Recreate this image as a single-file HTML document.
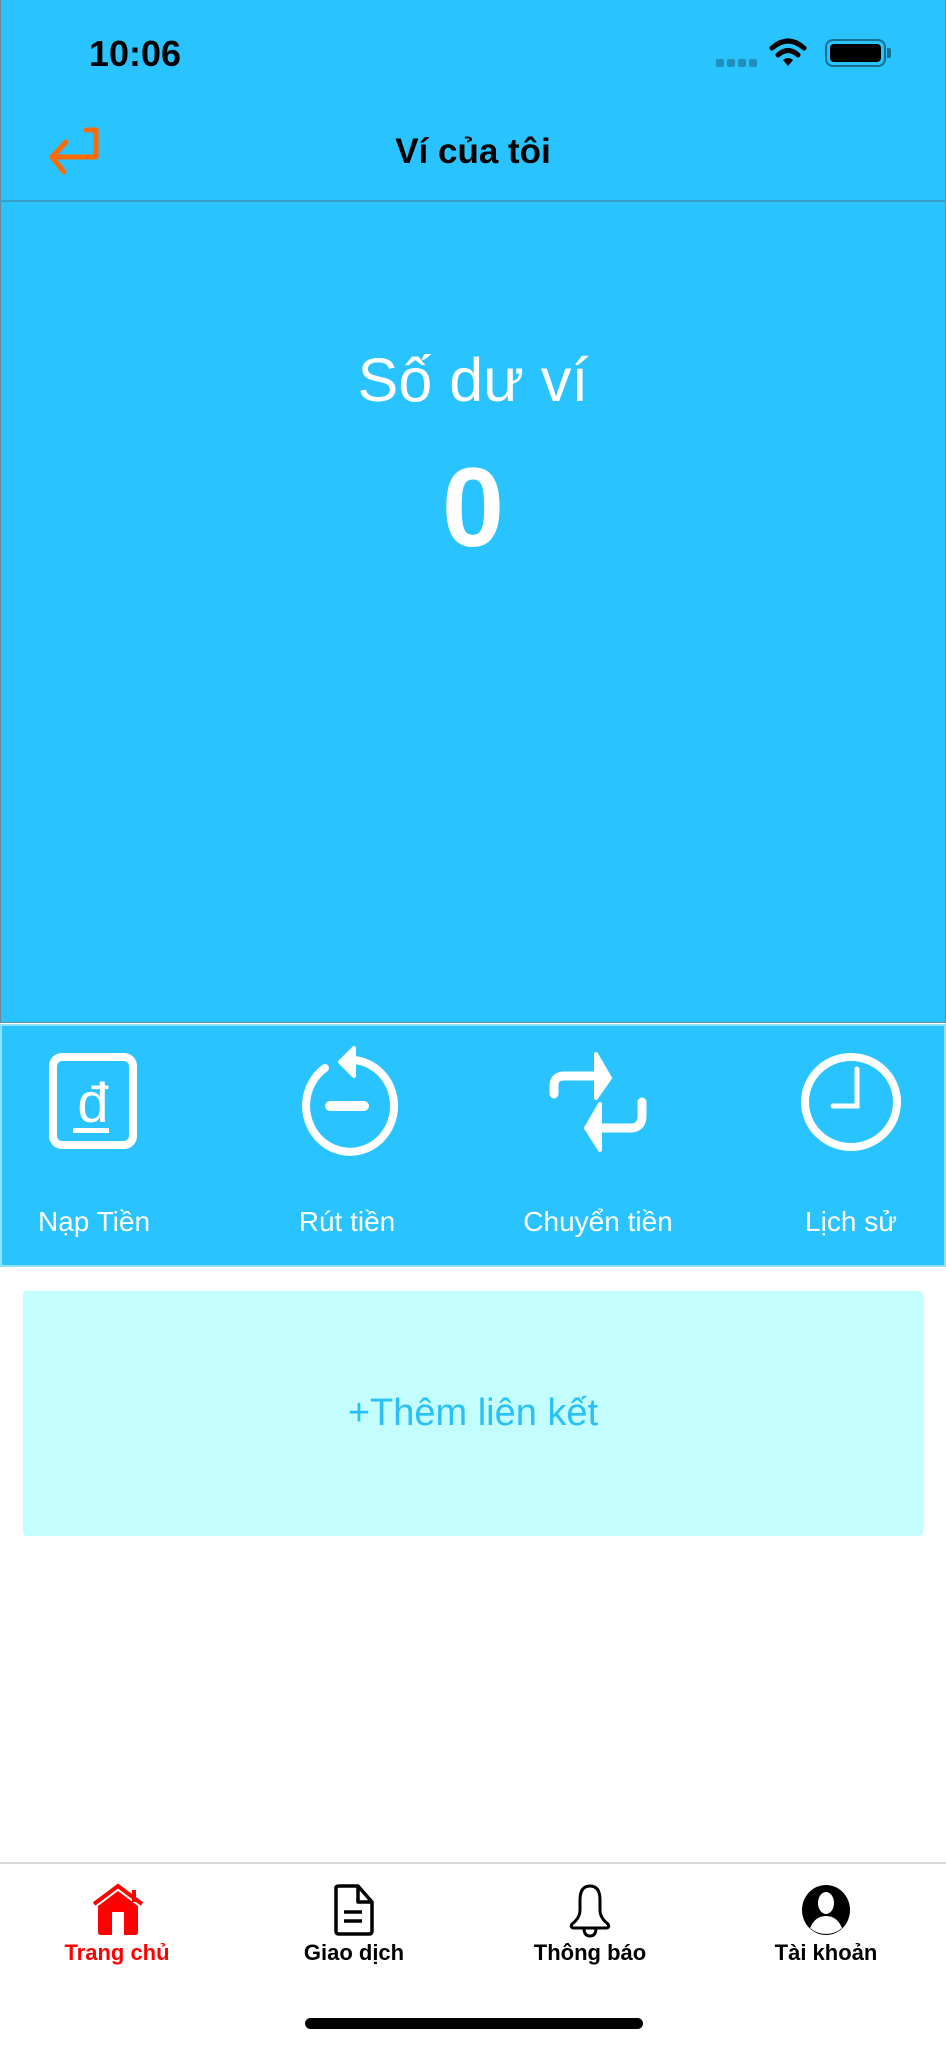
<!DOCTYPE html>
<html><head><meta charset="utf-8"><style>
*{margin:0;padding:0;box-sizing:border-box}
body{width:946px;height:2047px;position:relative;background:#fff;font-family:"Liberation Sans",sans-serif;overflow:hidden}
.abs{position:absolute}
svg{overflow:visible}
.blue{background:#29c3ff}
.t{position:absolute;white-space:nowrap;line-height:1}
</style></head><body>
<div class="abs blue" style="left:0;top:0;width:946px;height:1023px;border:1px solid #6a8a99;border-top:none"></div>
<div class="abs" style="left:0;top:200px;width:946px;height:2px;background:#3a9fc8"></div>
<div class="t" style="left:89px;top:36px;font-size:36px;font-weight:bold;color:#000">10:06</div>
<div class="abs" style="left:716px;top:59px;width:42px;height:8px">
<span class="abs" style="left:0;width:8px;height:8px;border-radius:2px;background:#1f8fbd"></span>
<span class="abs" style="left:11px;width:8px;height:8px;border-radius:2px;background:#1f8fbd"></span>
<span class="abs" style="left:22px;width:8px;height:8px;border-radius:2px;background:#1f8fbd"></span>
<span class="abs" style="left:33px;width:8px;height:8px;border-radius:2px;background:#1f8fbd"></span>
</div>
<svg class="abs" style="left:770px;top:38px" width="36" height="30" viewBox="0 0 36 30"><path d="M2 10 Q18 -4 34 10" stroke="#000" stroke-width="5" fill="none" stroke-linecap="round"/><path d="M8 17 Q18 8 28 17" stroke="#000" stroke-width="5" fill="none" stroke-linecap="round"/><path d="M13 22 Q18 18 23 22 L18 28Z" fill="#000"/></svg>
<div class="abs" style="left:825px;top:39px;width:61px;height:28px;border:2px solid #1a6e92;border-radius:8px;padding:3px"><div style="width:100%;height:100%;background:#000;border-radius:4px"></div></div>
<div class="abs" style="left:887px;top:48px;width:4px;height:10px;background:#1a6e92;border-radius:0 2px 2px 0"></div>
<svg class="abs" style="left:44px;top:126px" width="62" height="50" viewBox="0 0 62 50"><path d="M42 4 H52 V31 H10 M22 16 L8 31 L20 46" stroke="#ff6a00" stroke-width="5" fill="none" stroke-linecap="round" stroke-linejoin="round"/></svg>
<div class="t" style="left:0;width:946px;text-align:center;top:134px;font-size:35px;font-weight:bold;color:#000">Ví của tôi</div>
<div class="t" style="left:0;width:946px;text-align:center;top:350px;font-size:61px;color:#fff">Số dư ví</div>
<div class="t" style="left:0;width:946px;text-align:center;top:452px;font-size:112px;font-weight:bold;color:#fff">0</div>
<div class="abs blue" style="left:0;top:1024px;width:946px;height:243px;border:2px solid #8fe2fb"></div>
<svg class="abs" style="left:48px;top:1052px" width="92" height="100" viewBox="0 0 92 100"><rect x="5" y="5" width="80" height="88" rx="9" stroke="#fff" stroke-width="8" fill="none"/><text x="45" y="70" text-anchor="middle" font-family="Liberation Sans" font-size="56" fill="#fff">đ</text><rect x="25" y="76" width="36" height="5" fill="#fff"/></svg>
<svg class="abs" style="left:294px;top:1046px" width="106" height="110" viewBox="0 0 106 110"><path d="M31 22 A44 46 0 1 0 60 14" stroke="#fff" stroke-width="8" fill="none" stroke-linecap="round"/><path d="M60 2 L46 16 L60 30 Z" fill="#fff" stroke="#fff" stroke-width="4" stroke-linejoin="round"/><rect x="31" y="55" width="44" height="10" rx="5" fill="#fff"/></svg>
<svg class="abs" style="left:548px;top:1052px" width="100" height="100" viewBox="0 0 100 100"><path d="M6 42 V34 Q6 24 16 24 H50" stroke="#fff" stroke-width="9" fill="none" stroke-linecap="round"/><path d="M48 2 L62 26 L48 46 Z" fill="#fff" stroke="#fff" stroke-width="4" stroke-linejoin="round"/><path d="M94 50 V64 Q94 76 82 76 H52" stroke="#fff" stroke-width="9" fill="none" stroke-linecap="round"/><path d="M52 52 L38 76 L52 98 Z" fill="#fff" stroke="#fff" stroke-width="4" stroke-linejoin="round"/></svg>
<svg class="abs" style="left:800px;top:1052px" width="102" height="100" viewBox="0 0 102 100"><ellipse cx="51" cy="50" rx="46" ry="45" stroke="#fff" stroke-width="8" fill="none"/><path d="M57 17 V54 H33" stroke="#fff" stroke-width="5" fill="none" stroke-linecap="round"/></svg>
<div class="t" style="left:-6px;width:200px;text-align:center;top:1208px;font-size:28px;color:#fff">Nạp Tiền</div>
<div class="t" style="left:247px;width:200px;text-align:center;top:1208px;font-size:28px;color:#fff">Rút tiền</div>
<div class="t" style="left:498px;width:200px;text-align:center;top:1208px;font-size:28px;color:#fff">Chuyển tiền</div>
<div class="t" style="left:751px;width:200px;text-align:center;top:1208px;font-size:28px;color:#fff">Lịch sử</div>
<div class="abs" style="left:23px;top:1291px;width:900px;height:245px;background:#c4fdfe;border-radius:4px"></div>
<div class="t" style="left:0;width:946px;text-align:center;top:1394px;font-size:38px;color:#29bff8">+Thêm liên kết</div>
<div class="abs" style="left:0;top:1862px;width:946px;height:2px;background:#d8d8d8"></div>
<svg class="abs" style="left:88px;top:1884px" width="60" height="52" viewBox="0 0 60 52"><path d="M6 20 L30 2 L54 20" stroke="#f00" stroke-width="4" fill="none"/><rect x="44" y="6" width="4" height="12" fill="#f00"/><path d="M10 22 L30 7 L50 22 V48 Q50 51 47 51 H13 Q10 51 10 48 Z" fill="#f00"/><rect x="24" y="28" width="12" height="23" fill="#fff"/></svg>
<svg class="abs" style="left:332px;top:1884px" width="44" height="52" viewBox="0 0 44 52"><path d="M4 4 Q4 2 7 2 H26 L40 18 V47 Q40 50 37 50 H7 Q4 50 4 47 Z M26 2 V18 H40" stroke="#000" stroke-width="3.5" fill="none" stroke-linejoin="round"/><path d="M12 28 H30 M12 37 H30" stroke="#000" stroke-width="3.5"/></svg>
<svg class="abs" style="left:566px;top:1884px" width="48" height="54" viewBox="0 0 48 54"><path d="M24 2 Q14 2 14 16 V26 Q14 34 6 40 Q4 44 8 44 H40 Q44 44 42 40 Q34 34 34 26 V16 Q34 2 24 2Z" stroke="#000" stroke-width="3" fill="none"/><path d="M18 44 Q18 52 24 52 Q30 52 30 44" stroke="#000" stroke-width="3" fill="none"/></svg>
<svg class="abs" style="left:801px;top:1884px" width="50" height="52" viewBox="0 0 50 52"><ellipse cx="25" cy="26" rx="24" ry="25" fill="#000"/><ellipse cx="25" cy="19" rx="8" ry="11" fill="#fff"/><path d="M9 44 Q14 32 25 32 Q36 32 41 44 Q34 50 25 50 Q16 50 9 44Z" fill="#fff"/></svg>
<div class="t" style="left:17px;width:200px;text-align:center;top:1942px;font-size:22px;font-weight:bold;color:#f00">Trang chủ</div>
<div class="t" style="left:254px;width:200px;text-align:center;top:1942px;font-size:22px;font-weight:bold;color:#000">Giao dịch</div>
<div class="t" style="left:490px;width:200px;text-align:center;top:1942px;font-size:22px;font-weight:bold;color:#000">Thông báo</div>
<div class="t" style="left:726px;width:200px;text-align:center;top:1942px;font-size:22px;font-weight:bold;color:#000">Tài khoản</div>
<div class="abs" style="left:305px;top:2018px;width:338px;height:11px;border-radius:6px;background:#000"></div>
</body></html>
